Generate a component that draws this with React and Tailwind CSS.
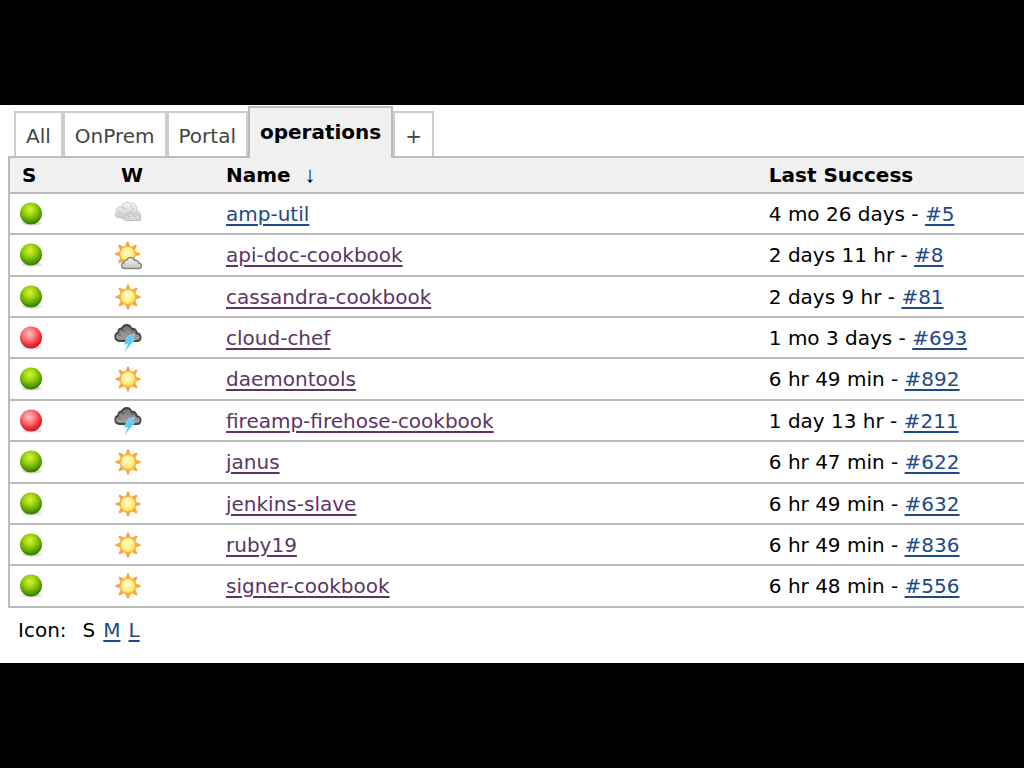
const tabs = [
    { name: 'All' },
    { name: 'OnPrem' },
    { name: 'Portal' },
    { name: 'operations', active: true },
    { name: '+' },
];

const jobs = [
    { name: 'amp-util', ok: true, weather: 'cloudy', last: '4 mo 26 days', build: '#5', fresh: true },
    { name: 'api-doc-cookbook', ok: true, weather: 'partly', last: '2 days 11 hr', build: '#8' },
    { name: 'cassandra-cookbook', ok: true, weather: 'sunny', last: '2 days 9 hr', build: '#81' },
    { name: 'cloud-chef', ok: false, weather: 'storm', last: '1 mo 3 days', build: '#693' },
    { name: 'daemontools', ok: true, weather: 'sunny', last: '6 hr 49 min', build: '#892' },
    { name: 'fireamp-firehose-cookbook', ok: false, weather: 'storm', last: '1 day 13 hr', build: '#211' },
    { name: 'janus', ok: true, weather: 'sunny', last: '6 hr 47 min', build: '#622' },
    { name: 'jenkins-slave', ok: true, weather: 'sunny', last: '6 hr 49 min', build: '#632' },
    { name: 'ruby19', ok: true, weather: 'sunny', last: '6 hr 49 min', build: '#836' },
    { name: 'signer-cookbook', ok: true, weather: 'sunny', last: '6 hr 48 min', build: '#556' },
];

const CLOUD = 'M5 13.5C2.5 13.5 1 12 1 10.2C1 8.4 2.3 7.2 4 7.1C3.8 4.8 5.6 3.4 7.6 3.8C8.6 1.8 10.6 1 12.6 1.1C15 1.2 16.6 2.5 17.2 4.2C20 3.5 22.3 5 22.2 7.4C24.4 7.5 26.2 8.8 26.2 10.6C26.2 12.4 24.8 13.5 22.6 13.5Z';

// Gradients shared by all the row icons
const Gradients = () => (
    <svg className="absolute size-0" aria-hidden="true">
        <defs>
            <radialGradient id="green" cx="45%" cy="32%" r="65%">
                <stop offset="0" stopColor="#d8f23c" />
                <stop offset="0.4" stopColor="#9fd510" />
                <stop offset="0.8" stopColor="#58a000" />
                <stop offset="1" stopColor="#3d7d00" />
            </radialGradient>
            <radialGradient id="red" cx="42%" cy="34%" r="65%">
                <stop offset="0" stopColor="#ffc4c4" />
                <stop offset="0.4" stopColor="#ff7d7f" />
                <stop offset="0.8" stopColor="#ee2a30" />
                <stop offset="1" stopColor="#c51f25" />
            </radialGradient>
            <radialGradient id="sun" cx="42%" cy="38%" r="60%">
                <stop offset="0" stopColor="#fffbd0" />
                <stop offset="0.6" stopColor="#fff08c" />
                <stop offset="1" stopColor="#ffe04e" />
            </radialGradient>
            <linearGradient id="pale" x1="0" y1="0" x2="0" y2="1">
                <stop offset="0" stopColor="#f5f5f5" />
                <stop offset="1" stopColor="#c4c4c4" />
            </linearGradient>
            <linearGradient id="dark" x1="0" y1="0" x2="0" y2="1">
                <stop offset="0" stopColor="#737373" />
                <stop offset="1" stopColor="#a6a6a6" />
            </linearGradient>
        </defs>
    </svg>
);

const Ball = ({ ok }) => (
    <svg viewBox="0 0 24 26" className="block w-6 h-[26px]" role="img" aria-label={ok ? 'Success' : 'Failed'}>
        <ellipse cx="12" cy="22.5" rx="10" ry="2" fill="#000" opacity="0.13" />
        <circle cx="11" cy="12.5" r="11" fill={ok ? 'url(#green)' : 'url(#red)'} />
    </svg>
);

const Sun = ({ x, y }) => (
    <g transform={`translate(${x} ${y})`}>
        {[0, 45, 90, 135, 180, 225, 270, 315].map((a) => (
            <path key={a} d="M-0.8 -12.6H0.8L2.6 -7.4H-2.6Z" transform={`rotate(${a})`} fill="#fba63a" />
        ))}
        <circle r="7.8" fill="url(#sun)" stroke="#fbb048" strokeWidth="1.5" />
    </g>
);

const Weather = ({ type }) => (
    <svg viewBox="0 0 30 30" className="block size-[30px]" role="img" aria-label={type}>
        {type === 'sunny' && <Sun x={15} y={15} />}
        {type === 'partly' && (
            <>
                <Sun x={14.5} y={14} />
                <path d={CLOUD} transform="translate(7.8 16.6) scale(0.79 0.88)" fill="url(#pale)" stroke="#858585" strokeWidth="1.7" />
            </>
        )}
        {type === 'cloudy' && (
            <>
                <path d="M6 18.5C2 19 1 15 3.5 13.5C2.5 10 5 7.4 8 8C9 4 14 1.8 17 4.4C21.5 3.4 25 7.5 23.4 11.4C27 12.5 29 17 27.3 21.3L13 21.8C11.5 19.5 9 19.5 6 18.5Z" fill="url(#pale)" stroke="#c9c9c9" />
                <path d="M12.5 21.5C9.5 19 11.5 15.8 14.3 16C15 12.5 19.5 11.6 21 14.5C24.8 13.8 28.5 17.5 27.2 21.3Z" fill="#d7d7d5" stroke="#b8b8b8" strokeWidth="0.8" />
                <path d="M5 14C7 12 9 13 10 15M9 9C11 8 13 9 13.5 11M17 7C19 7 20 9 19.5 10.5M15 17L18 19M20 15L22 18" fill="none" stroke="#b2b2b2" strokeDasharray="2 1" />
            </>
        )}
        {type === 'storm' && (
            <>
                <path d={CLOUD} transform="translate(1.2 0.8) scale(1.01 1.26)" fill="url(#dark)" stroke="#454545" strokeWidth="1.7" />
                <path d="M8 8C9 6.5 11 7 12 8M18 9C19.5 7 22 8 22.5 10M5 13C6 12 7 12 8 13" fill="none" stroke="#575757" />
                <path d="M15.5 12.8L21.5 11.2L18.5 16.8L22 16.3L12 28.6L14.8 20.8L10.8 21.5Z" fill="#5bcdfb" stroke="#a6e6ff" strokeWidth="0.6" />
            </>
        )}
    </svg>
);

const Link = ({ visited, children }) => (
    <a
        href="#"
        className={`underline decoration-2 underline-offset-3 ${visited ? 'text-[#5c3566]' : 'text-[#204a87]'}`}
    >
        {children}
    </a>
);

const App = () => {
    return (
        <div className="min-h-screen bg-black flex flex-col justify-center font-['DejaVu_Sans',Verdana,sans-serif] text-[20px] leading-6 text-black">
            <Gradients />
            <main className="bg-white pt-px pb-[21px]">
                {/* View tabs */}
                <nav className="flex items-end pl-[14px]">
                    {tabs.map((tab) => (
                        <a
                            key={tab.name}
                            href="#"
                            className={
                                tab.active
                                    ? 'relative -mb-[2px] h-[52px] px-[10px] pt-[12px] border-2 border-b-0 border-[#bbb] bg-[#f0f0f0] font-bold'
                                    : 'h-[45px] px-[10px] pt-[11px] border-2 border-b-0 border-[#ccc] text-[#444]'
                            }
                        >
                            {tab.name}
                        </a>
                    ))}
                </nav>

                {/* Job list */}
                <div className="pl-2">
                    <table className="w-full table-fixed border-separate border-spacing-0 border-l-2 border-t-2 border-[#bbb] text-left">
                        <thead>
                            <tr className="h-9 bg-[#f0f0f0]">
                                <th className="w-[91px] pl-3 border-b-2 border-[#bbb]">S</th>
                                <th className="w-[105px] pl-5 border-b-2 border-[#bbb]">W</th>
                                <th className="w-8/15 pl-5 border-b-2 border-[#bbb]">
                                    Name&nbsp; <span className="font-['Liberation_Sans',sans-serif] font-normal text-[22px] leading-none">↓</span>
                                </th>
                                <th className="pl-[22px] border-b-2 border-[#bbb]">Last Success</th>
                            </tr>
                        </thead>
                        <tbody>
                            {jobs.map((job) => (
                                <tr key={job.name} className="h-[41px] nth-[5n+2]:h-[42px] nth-[5n]:h-[42px]">
                                    <td className="pl-[10px] border-b-2 border-[#bbb]">
                                        <Ball ok={job.ok} />
                                    </td>
                                    <td className="pl-3 border-b-2 border-[#bbb]">
                                        <Weather type={job.weather} />
                                    </td>
                                    <td className="pl-5 border-b-2 border-[#bbb]">
                                        <Link visited={!job.fresh}>{job.name}</Link>
                                    </td>
                                    <td className="pl-[22px] border-b-2 border-[#bbb]">
                                        {job.last} - <Link>{job.build}</Link>
                                    </td>
                                </tr>
                            ))}
                        </tbody>
                    </table>
                </div>

                {/* Icon size */}
                <div className="flex gap-2 pl-[18px] pt-[10px]">
                    <span className="mr-2">Icon:</span>
                    <span>S</span>
                    <Link>M</Link>
                    <Link>L</Link>
                </div>
            </main>
        </div>
    );
};

export default App;
